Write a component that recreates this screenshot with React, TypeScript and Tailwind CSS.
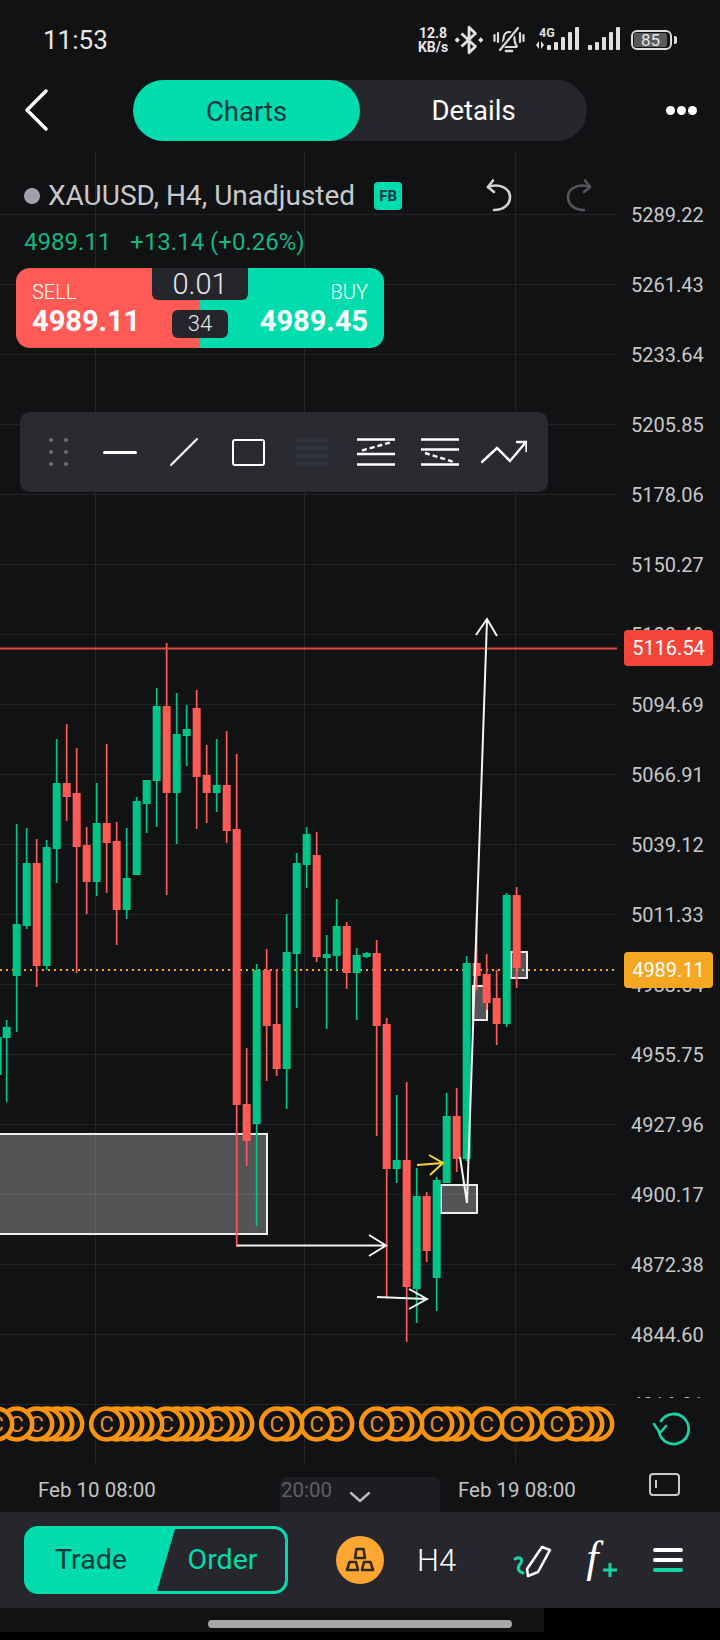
import React from 'react';

// [index, wick top, body top, body bottom, wick bottom, up?]
type Candle = [number, number, number, number, number, boolean];

const candles: Candle[] = [
  [0, 1020, 1027, 1038, 1102, true],
  [1, 824, 924, 976, 1032, true],
  [2, 828, 863, 926, 929, true],
  [3, 839, 863, 966, 987, false],
  [4, 840, 847, 966, 970, true],
  [5, 739, 783, 849, 883, true],
  [6, 724, 783, 797, 821, false],
  [7, 748, 793, 847, 973, false],
  [8, 827, 845, 882, 914, false],
  [9, 783, 823, 882, 896, true],
  [10, 744, 823, 843, 893, false],
  [11, 822, 841, 910, 945, false],
  [12, 828, 878, 910, 919, true],
  [13, 797, 801, 875, 875, true],
  [14, 780, 780, 804, 833, true],
  [15, 688, 706, 781, 827, true],
  [16, 643, 706, 793, 895, false],
  [17, 693, 734, 793, 844, true],
  [18, 705, 729, 736, 766, true],
  [19, 690, 708, 777, 829, false],
  [20, 745, 775, 793, 823, false],
  [21, 739, 785, 793, 812, true],
  [22, 731, 785, 831, 843, false],
  [23, 754, 829, 1105, 1247, false],
  [24, 1048, 1104, 1141, 1166, false],
  [25, 964, 970, 1124, 1226, true],
  [26, 949, 970, 1026, 1081, false],
  [27, 969, 1024, 1069, 1076, false],
  [28, 914, 952, 1069, 1109, true],
  [29, 853, 863, 954, 1008, true],
  [30, 827, 834, 865, 888, true],
  [31, 832, 855, 957, 962, false],
  [32, 935, 954, 958, 1029, true],
  [33, 899, 926, 956, 970, true],
  [34, 922, 926, 973, 989, false],
  [35, 948, 955, 973, 1020, true],
  [36, 952, 953, 957, 958, true],
  [37, 940, 953, 1026, 1136, false],
  [38, 1018, 1024, 1169, 1297, false],
  [39, 1095, 1160, 1169, 1183, true],
  [40, 1082, 1160, 1287, 1342, false],
  [41, 1168, 1196, 1289, 1323, true],
  [42, 1192, 1196, 1251, 1262, false],
  [43, 1177, 1180, 1278, 1311, true],
  [44, 1093, 1116, 1183, 1183, true],
  [45, 1088, 1116, 1159, 1172, false],
  [46, 956, 963, 1159, 1161, true],
  [47, 915, 963, 976, 990, false],
  [48, 954, 974, 1003, 1010, false],
  [49, 970, 998, 1024, 1045, false],
  [50, 893, 895, 1024, 1027, true],
  [51, 887, 895, 968, 988, false],
];

const markers = [
  -1, 1, 3, 4, 5, 6, 10, 11, 12, 13, 14, 16, 17, 18, 19, 21, 22, 23, 27, 28, 31, 33, 37, 39, 40,
  43, 44, 45, 48, 51, 52, 55, 57, 58, 59,
];

const gridY = [
  214, 284, 354, 424, 494, 564, 634, 704, 774, 844, 914, 984, 1054, 1124, 1194, 1264, 1334, 1404,
];

const prices = [
  '5289.22', '5261.43', '5233.64', '5205.85', '5178.06', '5150.27', '5122.48', '5094.69', '5066.91',
  '5039.12', '5011.33', '4983.54', '4955.75', '4927.96', '4900.17', '4872.38', '4844.60', '4816.81',
];

const cx = (k: number) => 6.67 + 10 * k;

const ChartDrawing = () => (
  <svg width="617" height="1318" viewBox="0 152 617 1318" className="block">
    {/* Grid */}
    {gridY.map((y) => (
      <line key={y} x1="0" x2="617" y1={y + 0.5} y2={y + 0.5} stroke="#222428" />
    ))}
    {[95, 304, 515].map((x) => (
      <line key={x} x1={x + 0.5} x2={x + 0.5} y1="152" y2="1463" stroke="#222428" />
    ))}

    {/* Price lines */}
    <line x1="0" x2="617" y1="648.5" y2="648.5" stroke="#e8483d" strokeWidth="2" />
    <line x1="0" x2="615" y1="970" y2="970" stroke="#f5a623" strokeWidth="2" strokeDasharray="2 4" />

    {/* Zones */}
    <g fill="#ffffff" fillOpacity="0.28" stroke="#ececec" strokeWidth="2">
      <rect x="-4" y="1134" width="271" height="100" />
      <rect x="441" y="1185" width="36" height="28" />
      <rect x="473" y="986" width="14" height="34" />
      <rect x="511" y="952" width="16" height="26" />
    </g>

    {/* Stray wick on the left edge */}
    <line x1="0.8" x2="0.8" y1="1037" y2="1075" stroke="#00c586" strokeWidth="1.7" />

    {/* Candles */}
    {candles.map(([k, wt, bt, bb, wb, up]) => {
      const c = up ? '#00c586' : '#ff5a55';
      return (
        <g key={k}>
          <line x1={cx(k)} x2={cx(k)} y1={wt} y2={wb} stroke={c} strokeWidth="1.7" />
          <rect x={cx(k) - 4} y={bt} width="8" height={bb - bt} fill={c} />
        </g>
      );
    })}

    {/* Drawn arrows */}
    <g fill="none" stroke="#f4f4f4" strokeWidth="2">
      <path d="M237 1245.5H385M369 1235L386 1245.5L369 1256" />
      <path d="M377 1297L426 1299M409 1289L427 1299L409 1309" />
      <path d="M460 1157L467 1203L487 620M476 635L487 619L497 636" />
    </g>
    <path d="M417 1165L443 1163M429 1155L443 1163L430 1175" fill="none" stroke="#f5d33a" strokeWidth="2" />

    {/* Event markers */}
    {[...markers].reverse().map((k) => (
      <g key={k}>
        <circle cx={cx(k)} cy="1424" r="15.5" fill="#111214" stroke="#f7930e" strokeWidth="4.5" />
        <text x={cx(k)} y="1432" textAnchor="middle" fontSize="22" fill="#e8922a">
          C
        </text>
      </g>
    ))}
  </svg>
);

const BellOff = () => (
  <svg width="32" height="28" viewBox="0 0 32 28" fill="none" stroke="#dcdcdc" strokeWidth="2.2" strokeLinecap="round">
    <path d="M9 19c2-3 1-6 2-9 1-3 3-4 5-4s4 1 5 4c1 3 0 6 2 9 1 1 1 2 0 2H9c-1 0-1-1 0-2Z" />
    <path d="M13 25h6" strokeWidth="2.6" />
    <path d="M6 24 25 2" stroke="#111214" strokeWidth="5" />
    <path d="M7 24 25 2" />
    <path d="M1.5 9v6M5 7v9M27 7v9M30.5 9v6" />
  </svg>
);

const StatusBar = () => (
  <div className="h-[80px] pl-[43px] pr-[43px] flex items-center justify-between text-[#e6e6e6]">
    <span className="text-[26px] leading-none">11:53</span>
    <div className="flex items-center">
      <div className="flex flex-col items-center text-[14px] font-bold leading-[14px] w-[30px]">
        <span>12.8</span>
        <span>KB/s</span>
      </div>
      {/* Bluetooth */}
      <svg width="28" height="30" viewBox="0 0 26 28" className="ml-[7px]" fill="none" stroke="#e0e0e0" strokeWidth="2.6" strokeLinejoin="round">
        <path d="M6 8l13 12-6 6V2l6 6L6 20" />
        <path d="M2 11.500l2.500 2.500L2 16.500-.5 14ZM24 11.500l2.500 2.500-2.500 2.500-2.500-2.500Z" fill="#e0e0e0" stroke="none" />
      </svg>
      <div className="ml-[10px]">
        <BellOff />
      </div>
      {/* Mobile data and signal bars */}
      <svg width="96" height="26" viewBox="0 0 96 26" className="ml-[11px] mt-[-2px]" fill="#e0e0e0">
        <text x="3" y="11" fontSize="12.5" fontWeight="700">
          4G
        </text>
        <path d="M3 15v8L0 19ZM5 15v8l3-4Z" />
        <rect x="11" y="19" width="4" height="5" rx="1" />
        <rect x="18" y="16" width="4" height="8" rx="1" />
        <rect x="25" y="11" width="4" height="13" rx="1" />
        <rect x="32" y="6" width="4" height="18" rx="1" />
        <rect x="39" y="1" width="4" height="23" rx="1" />
        <rect x="52" y="19" width="4" height="5" rx="1" />
        <rect x="59" y="16" width="4" height="8" rx="1" />
        <rect x="66" y="11" width="4" height="13" rx="1" />
        <rect x="73" y="6" width="4" height="18" rx="1" />
        <rect x="80" y="1" width="4" height="23" rx="1" />
      </svg>
      {/* Battery */}
      <div className="ml-[-1px] flex items-center">
        <div className="w-[41px] h-[20px] rounded-[6px] border-2 border-[#dcdcdc] p-[1px] flex">
          <div className="w-[33px] bg-[#5a5a5a] rounded-[2px] flex items-center justify-center text-[17px] leading-none text-[#e6e6e6]">
            85
          </div>
        </div>
        <div className="w-[3px] h-[8px] ml-[2px] rounded-r-[2px] bg-[#dcdcdc]" />
      </div>
    </div>
  </div>
);

const TabsHeader = () => (
  <div className="h-[72px] flex items-start relative">
    <svg width="30" height="44" viewBox="0 0 30 44" className="ml-[21px] mt-[8px]" fill="none" stroke="#ffffff" strokeWidth="3.500" strokeLinecap="round" strokeLinejoin="round">
      <path d="M25 3L6 22L25 41" />
    </svg>
    <div className="ml-[82px] w-[454px] h-[61px] rounded-full bg-[#26272c] flex text-[27.500px] pt-[1px]">
      <div className="w-[227px] -mt-[1px] rounded-full bg-[#00dcac] text-[#0d3a3f] flex items-center justify-center pt-[2px]">Charts</div>
      <div className="flex-1 text-white flex items-center justify-center">Details</div>
    </div>
    <div className="ml-[79px] mt-[26px] flex gap-[2px]">
      <span className="w-[9px] h-[9px] rounded-full bg-white" />
      <span className="w-[9px] h-[9px] rounded-full bg-white" />
      <span className="w-[9px] h-[9px] rounded-full bg-white" />
    </div>
  </div>
);

const UndoIcon = ({ color, flip }: { color: string; flip?: boolean }) => (
  <svg width="28" height="34" viewBox="0 0 28 34" fill="none" stroke={color} strokeWidth="2.600" strokeLinecap="round" strokeLinejoin="round" className={flip ? '-scale-x-100' : ''}>
    <path d="M3 8C14 4 25 9 25 18C25 26 18 31 9 31" />
    <path d="M8 1.500L3 8L9 13" />
  </svg>
);

const DrawingToolbar = () => (
  <div className="mt-[64px] ml-[20px] w-[528px] h-[80px] rounded-[10px] bg-[#2a2b30] pl-[4px] flex items-center">
    <div className="w-[64px] flex justify-center pl-[4px]">
      <div className="grid grid-cols-2 gap-x-[11px] gap-y-[8px]">
        {[0, 1, 2, 3, 4, 5].map((i) => (
          <span key={i} className="w-[4px] h-[4px] rounded-full bg-[#6c6d72]" />
        ))}
      </div>
    </div>
    <div className="w-[64px] flex justify-center">
      <div className="w-[34px] h-[3px] bg-white rounded-full" />
    </div>
    <div className="w-[64px] flex justify-center">
      <svg width="28" height="28" viewBox="0 0 28 28" stroke="#f0f0f0" strokeWidth="2.400" strokeLinecap="round">
        <path d="M1 27L27 1" />
      </svg>
    </div>
    <div className="w-[64px] flex justify-center">
      <div className="w-[33px] h-[27px] rounded-[3px] border-[2.500px] border-white" />
    </div>
    <div className="w-[64px] flex justify-center">
      <svg width="33" height="28" viewBox="0 0 33 28" stroke="#2f333e" strokeWidth="3.500">
        <path d="M0 2H33M0 10H33M0 18H33M0 26H33" />
      </svg>
    </div>
    <div className="w-[64px] flex justify-center">
      <svg width="38" height="28" viewBox="0 0 38 28" fill="none" stroke="#ffffff" strokeWidth="2.400">
        <path d="M0 1.500H38M0 16H38M0 26.500H38" />
        <path d="M5 12.500L33 4.500" strokeDasharray="5 3" />
      </svg>
    </div>
    <div className="w-[64px] flex justify-center">
      <svg width="38" height="28" viewBox="0 0 38 28" fill="none" stroke="#ffffff" strokeWidth="2.400">
        <path d="M0 1.500H38M0 11.500H38M0 26.500H38" />
        <path d="M4 15L33 24" strokeDasharray="5 3" />
      </svg>
    </div>
    <div className="w-[64px] flex justify-center">
      <svg width="46" height="24" viewBox="0 0 46 24" fill="none" stroke="#ffffff" strokeWidth="2.400" strokeLinecap="round">
        <path d="M1 22L16 8L29 21L45 2" />
        <path d="M36 2H45.500V11" />
      </svg>
    </div>
  </div>
);

const ChartOverlay = () => (
  <div className="absolute left-0 top-0 w-[617px] pt-[30px] flex flex-col">
    <div className="h-[28px] pl-[24px] flex items-center">
      <span className="w-[16px] h-[16px] rounded-full bg-[#a0a0aa]" />
      <span className="ml-[8px] text-[28px] leading-none text-[#c8c8ca] whitespace-nowrap">XAUUSD, H4, Unadjusted</span>
      <span className="ml-[19px] w-[28px] h-[28px] rounded-[4px] bg-[#00dcac] text-[#0d3a3f] text-[15px] font-bold flex items-center justify-center">
        FB
      </span>
      <div className="ml-[83px]">
        <UndoIcon color="#d4d4d4" />
      </div>
      <div className="ml-[52px]">
        <UndoIcon color="#55565a" flip />
      </div>
    </div>
    <div className="mt-[17px] h-[30px] pl-[24px] flex items-center text-[24px] leading-none text-[#17b584]">
      <span>4989.11</span>
      <span className="ml-[19px]">+13.14 (+0.26%)</span>
    </div>
    {/* Sell / buy widget */}
    <div className="mt-[11px] ml-[16px] w-[368px] h-[80px] rounded-[14px] overflow-hidden flex relative text-white">
      <div className="w-[184px] bg-[#ff5a55] pl-[16px] pt-[12px]">
        <div className="text-[20px] leading-[24px] font-light">SELL</div>
        <div className="text-[29px] leading-[34px] font-bold">4989.11</div>
      </div>
      <div className="w-[184px] bg-[#00dcac] pr-[16px] pt-[12px] text-right">
        <div className="text-[20px] leading-[24px] font-light">BUY</div>
        <div className="text-[29px] leading-[34px] font-bold">4989.45</div>
      </div>
      <div className="absolute left-[136px] top-0 w-[96px] h-[32px] rounded-b-[6px] bg-[#25262b] text-[#e8e8e8] text-[29px] font-light leading-none flex items-center justify-center">
        0.01
      </div>
      <div className="absolute left-[156px] top-[42px] w-[56px] h-[28px] rounded-[6px] bg-[#25262b] text-[#e8e8e8] text-[22px] font-light leading-none flex items-center justify-center">
        34
      </div>
    </div>
    <DrawingToolbar />
  </div>
);

const PriceAxis = () => (
  <div className="w-[103px] relative">
    <div className="h-[1246px] overflow-hidden pt-[28px] pl-[14px] text-[20px] text-[#c8c8c8]">
      {prices.map((p) => (
        <div key={p} className="h-[70px] flex items-center">
          {p}
        </div>
      ))}
    </div>
    {/* Last / high price tags */}
    <div className="absolute left-[7px] top-[478px] w-[89px] h-[36px] rounded-[4px] bg-[#f4453a] text-white text-[20px] flex items-center justify-center">
      5116.54
    </div>
    <div className="absolute left-[7px] top-[800px] w-[89px] h-[36px] rounded-[4px] bg-[#f5a623] text-white text-[20px] flex items-center justify-center">
      4989.11
    </div>
    <svg width="38" height="36" viewBox="0 0 38 36" fill="none" stroke="#19d1a3" strokeWidth="2.800" strokeLinecap="round" className="ml-[35px] mt-[13px]">
      <path d="M9 10A15 15 0 1 1 7 21" />
      <path d="M2 13L8 22L14 15" strokeWidth="2.600" strokeLinejoin="round" />
    </svg>
  </div>
);

const TimeAxis = () => (
  <div className="h-[42px] flex items-start text-[20.500px] text-[#c4c4c4]">
    <span className="ml-[38px] w-[242px] mt-[7px] leading-[26px]">Feb 10 08:00</span>
    <div className="mt-[7px] w-[160px] h-[35px] rounded-t-[6px] bg-[#1c1d20] flex items-start">
      <span className="ml-[1px] leading-[26px] text-[#5e5f63]">20:00</span>
      <svg width="22" height="12" viewBox="0 0 22 12" fill="none" stroke="#b8b8b8" strokeWidth="2.400" strokeLinecap="round" strokeLinejoin="round" className="ml-[17px] mt-[14px]">
        <path d="M2 2L11 10L20 2" />
      </svg>
    </div>
    <span className="ml-[18px] w-[124px] mt-[7px] leading-[26px] whitespace-nowrap">Feb 19 08:00</span>
    <div className="ml-[67px] mt-[3px] w-[31px] h-[23px] rounded-[4px] border-2 border-[#c8c8c8] pl-[4px] pt-[5px]">
      <div className="w-[2px] h-[8px] bg-[#c8c8c8]" />
    </div>
  </div>
);

const BottomBar = () => (
  <div className="h-[96px] bg-[#26272c] flex items-center">
    <div className="ml-[24px] w-[264px] h-[68px] rounded-[14px] border-[3px] border-[#00dcac] bg-[#00dcac] flex text-[28.500px] overflow-hidden">
      <div className="w-[130px] flex items-center justify-center pr-[2px] text-[#0d3a3f]">Trade</div>
      <div className="flex-1 bg-[#26272c] rounded-r-[11px] [clip-path:polygon(18px_0,100%_0,100%_100%,0_100%)] flex items-center justify-center pl-[3px] text-[#00dcac]">
        Order
      </div>
    </div>
    <div className="ml-[48px] w-[48px] h-[48px] rounded-full bg-[#ffa733]">
      <svg width="48" height="48" viewBox="0 0 48 48" fill="none" stroke="#33291a" strokeWidth="2.600" strokeLinejoin="round">
        <path d="M20.500 13H27.500L29 22H19Z" />
        <path d="M13.500 26H20L22 34H11Z" />
        <path d="M28 26H34.500L37 34H26Z" />
      </svg>
    </div>
    <span className="ml-[33px] text-[31px] leading-none text-white font-light">H4</span>
    <svg width="40" height="36" viewBox="0 0 40 36" fill="none" strokeLinecap="round" strokeLinejoin="round" className="ml-[56px]">
      <path d="M3 17C8 14 11 17 9 21C5 25 5 29 11 31" stroke="#19d1a3" strokeWidth="3" />
      <path d="M15 27L30 5L38 8L26 30L16 34Z" stroke="#ffffff" strokeWidth="2.600" />
    </svg>
    <div className="ml-[35px] w-[30px] h-[40px] relative text-white">
      <span className="absolute left-[-1px] top-[-8px] text-[44px] leading-[52px] italic [font-family:'Liberation_Serif',serif]">f</span>
      <svg width="14" height="14" viewBox="0 0 14 14" stroke="#19d1a3" strokeWidth="3" className="absolute left-[16px] top-[23px]">
        <path d="M0 7H14M7 0V14" />
      </svg>
    </div>
    <div className="ml-[36px] flex flex-col gap-[6px]">
      <div className="w-[30px] h-[4px] rounded-full bg-white" />
      <div className="w-[30px] h-[4px] rounded-full bg-white" />
      <div className="w-[30px] h-[4px] rounded-full bg-[#19d1a3]" />
    </div>
  </div>
);

const HomeIndicator = () => (
  <div className="h-[32px] bg-black flex">
    <div className="w-[544px] h-[24px] bg-[#111214] pl-[208px] pt-[12px]">
      <div className="w-[304px] h-[8px] rounded-full bg-[#a9a9ab]" />
    </div>
  </div>
);

export default function App() {
  return (
    <div className="w-[720px] h-[1640px] overflow-hidden bg-[#111214] [font-family:Roboto,sans-serif]">
      <StatusBar />
      <TabsHeader />
      {/* Chart with the price axis beside it */}
      <div className="h-[1318px] flex relative">
        <div className="w-[617px] relative overflow-hidden">
          <ChartDrawing />
          <ChartOverlay />
        </div>
        <PriceAxis />
      </div>
      <TimeAxis />
      <BottomBar />
      <HomeIndicator />
    </div>
  );
}
